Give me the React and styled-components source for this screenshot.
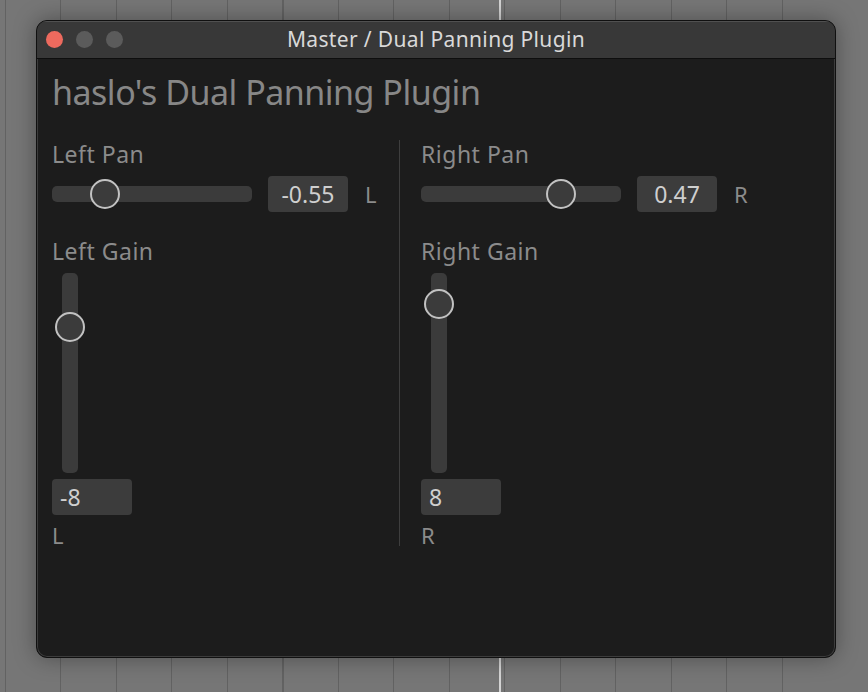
import React from "react";
import styled, { createGlobalStyle } from "styled-components";

const Global = createGlobalStyle`
  html, body { margin: 0; padding: 0; }
  body {
    width: 868px;
    height: 692px;
    overflow: hidden;
    background-color: #767676;
    background-image:
      linear-gradient(to right, transparent 499px, #d4d4d4 499px, #d4d4d4 501px, transparent 501px),
      repeating-linear-gradient(to right, transparent 0, transparent 5px, #626262 5px, #626262 6px, transparent 6px, transparent 55.5px);
    font-family: "Noto Sans", "Open Sans", sans-serif;
  }
`;

const Desk = styled.div`
  padding: 20px 0 0 36px;
`;

const Window = styled.div`
  width: 800px;
  height: 638px;
  box-sizing: border-box;
  border: 1px solid #101010;
  border-radius: 11px;
  overflow: hidden;
  background: #1c1c1c;
  box-shadow: inset 0 0 0 1px rgba(255, 255, 255, 0.14), 0 0 22px rgba(0, 0, 0, 0.35);
  display: flex;
  flex-direction: column;
`;

const TitleBar = styled.div`
  position: relative;
  height: 37px;
  flex: none;
  background: #383838;
  border-bottom: 1px solid #0e0e0e;
  display: flex;
  align-items: center;
  justify-content: center;
  box-shadow: inset 0 1px 0 rgba(255, 255, 255, 0.12);
`;

const Lights = styled.div`
  position: absolute;
  left: 9px;
  top: 10px;
  display: flex;
  gap: 13px;
`;

const Light = styled.span`
  width: 17px;
  height: 17px;
  border-radius: 50%;
  background: ${(p) => p.$color};
`;

const Title = styled.div`
  font-family: "Noto Sans", "Open Sans", sans-serif;
  font-size: 21px;
  line-height: 26px;
  letter-spacing: 0.35px;
  color: #d9d9d9;
  margin-top: -1px;
`;

const Body = styled.div`
  flex: 1;
  padding: 11px 15px 0;
`;

const Heading = styled.h1`
  margin: 0;
  font-size: 34px;
  line-height: 44px;
  font-weight: 400;
  letter-spacing: -0.5px;
  color: #878787;
`;

const Columns = styled.div`
  display: grid;
  grid-template-columns: 326px 1px 1fr;
  column-gap: 21px;
  margin-top: 27px;
`;

const Divider = styled.div`
  background: #3e3e3e;
  margin-top: -1px;
  margin-bottom: 2px;
`;

const Column = styled.div`
  display: flex;
  flex-direction: column;
  align-items: flex-start;
`;

const Label = styled.div`
  font-size: 23px;
  line-height: 26px;
  letter-spacing: 0.5px;
  color: #8b8b8b;
  margin-top: ${(p) => p.$gap || 0}px;
`;

const PanRow = styled.div`
  display: flex;
  align-items: center;
  height: 36px;
  margin-top: 9px;
`;

const HTrack = styled.div`
  position: relative;
  width: 200px;
  height: 16px;
  border-radius: 5px;
  background: #3b3b3b;
`;

const VTrack = styled.div`
  position: relative;
  width: 16px;
  height: 200px;
  border-radius: 5px;
  background: #3b3b3b;
  margin-top: 9px;
  margin-left: 10px;
`;

const Thumb = styled.div`
  position: absolute;
  width: 30px;
  height: 30px;
  box-sizing: border-box;
  border-radius: 50%;
  border: 2px solid #c2c2c2;
  background: #3b3b3b;
  ${(p) => (p.$vertical ? "left: -7px;" : "top: -7px;")}
`;

const ValueBox = styled.div`
  width: 80px;
  height: 36px;
  box-sizing: border-box;
  border-radius: 4px;
  background: #3c3c3c;
  color: #cfcfcf;
  font-size: 23px;
  line-height: 36px;
  display: flex;
  align-items: center;
  justify-content: ${(p) => (p.$left ? "flex-start" : "center")};
  padding-left: ${(p) => (p.$left ? "8px" : "0")};
  margin-left: ${(p) => p.$ml || 0}px;
  margin-top: ${(p) => p.$mt || 0}px;
`;

const Side = styled.div`
  font-size: 22px;
  line-height: 26px;
  color: #8b8b8b;
  margin-left: ${(p) => p.$ml || 0}px;
  margin-top: ${(p) => p.$mt || 0}px;
`;

function Channel({ name, pan, panFrac, gain, gainFrac, side }) {
  return (
    <Column>
      <Label>{name} Pan</Label>
      <PanRow>
        <HTrack>
          <Thumb style={{ left: `${panFrac * 170}px` }} />
        </HTrack>
        <ValueBox $ml={16}>{pan}</ValueBox>
        <Side $ml={17}>{side}</Side>
      </PanRow>
      <Label $gap={26}>{name} Gain</Label>
      <VTrack>
        <Thumb $vertical style={{ top: `${(1 - gainFrac) * 170}px` }} />
      </VTrack>
      <ValueBox $left $mt={6}>{gain}</ValueBox>
      <Side $mt={7}>{side}</Side>
    </Column>
  );
}

export default function App() {
  return (
    <>
      <Global />
      <Desk>
        <Window>
          <TitleBar>
            <Lights>
              <Light $color="#ed6a5e" />
              <Light $color="#5b5b5b" />
              <Light $color="#5b5b5b" />
            </Lights>
            <Title>Master / Dual Panning Plugin</Title>
          </TitleBar>
          <Body>
            <Heading>haslo's Dual Panning Plugin</Heading>
            <Columns>
              <Channel name="Left" pan="-0.55" panFrac={0.225} gain="-8" gainFrac={0.771} side="L" />
              <Divider />
              <Channel name="Right" pan="0.47" panFrac={0.735} gain="8" gainFrac={0.906} side="R" />
            </Columns>
          </Body>
        </Window>
      </Desk>
    </>
  );
}
